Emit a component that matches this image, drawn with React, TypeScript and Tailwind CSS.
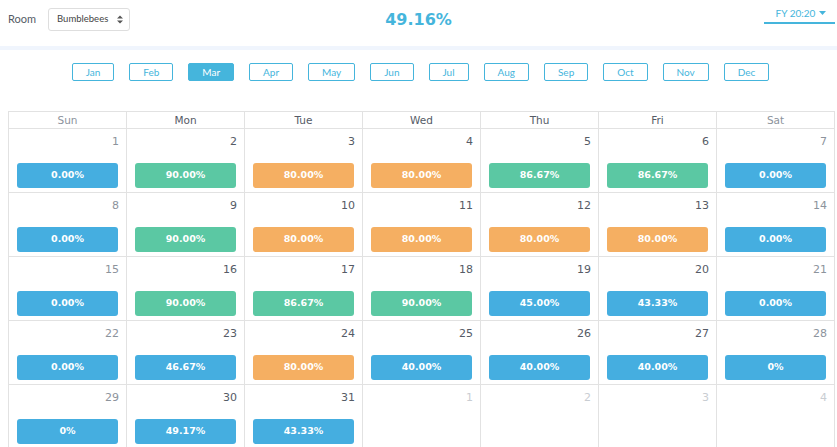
import React from "react";

type C = "b" | "g" | "o";
const colors: Record<C, string> = {
  b: "bg-[#45aee0]",
  g: "bg-[#5bc8a3]",
  o: "bg-[#f5af62]",
};

const rows: [number, string, C][][] = [
  [[1, "0.00%", "b"], [2, "90.00%", "g"], [3, "80.00%", "o"], [4, "80.00%", "o"], [5, "86.67%", "g"], [6, "86.67%", "g"], [7, "0.00%", "b"]],
  [[8, "0.00%", "b"], [9, "90.00%", "g"], [10, "80.00%", "o"], [11, "80.00%", "o"], [12, "80.00%", "o"], [13, "80.00%", "o"], [14, "0.00%", "b"]],
  [[15, "0.00%", "b"], [16, "90.00%", "g"], [17, "86.67%", "g"], [18, "90.00%", "g"], [19, "45.00%", "b"], [20, "43.33%", "b"], [21, "0.00%", "b"]],
  [[22, "0.00%", "b"], [23, "46.67%", "b"], [24, "80.00%", "o"], [25, "40.00%", "b"], [26, "40.00%", "b"], [27, "40.00%", "b"], [28, "0%", "b"]],
  [[29, "0%", "b"], [30, "49.17%", "b"], [31, "43.33%", "b"], [1, "", "b"], [2, "", "b"], [3, "", "b"], [4, "", "b"]],
];

const months = ["Jan", "Feb", "Mar", "Apr", "May", "Jun", "Jul", "Aug", "Sep", "Oct", "Nov", "Dec"];
const days = ["Sun", "Mon", "Tue", "Wed", "Thu", "Fri", "Sat"];

export default function App() {
  return (
    <div className="w-[837px] h-[447px] overflow-hidden bg-white font-['DejaVu_Sans',sans-serif]">
      {/* header */}
      <div className="h-[46px] flex items-start justify-between relative">
        <div className="flex items-center pl-2 pt-2 font-['Lato',sans-serif]">
          <span className="text-[11px] text-[#555b66]">Room</span>
          <div className="ml-[12px] w-[82px] h-[23px] border border-[#dedede] rounded-[3px] flex items-center pl-[8px] pr-[6px] justify-between">
            <span className="text-[9.5px] text-[#444]">Bumblebees</span>
            <svg width="6" height="9" viewBox="0 0 6 9">
              <path d="M0 3.5 L3 0.5 L6 3.5 Z M0 5.5 L3 8.5 L6 5.5 Z" fill="#555" />
            </svg>
          </div>
        </div>
        <div className="absolute left-0 right-0 top-[8px] text-center text-[16px] font-bold text-[#45b5dc] pointer-events-none">
          49.16%
        </div>
        <div className="mr-[2px] mt-[5px] w-[71px] border-b-2 border-[#45b5dc] h-[19px] flex items-start justify-center pt-[1px] pl-[3px]">
          <span className="text-[10px] text-[#45b5dc] font-['Lato',sans-serif]">FY 20:20</span>
          <svg width="7" height="4" viewBox="0 0 7 4" className="ml-[4px] mt-[5px]">
            <path d="M0 0 L7 0 L3.5 4 Z" fill="#45b5dc" />
          </svg>
        </div>
      </div>
      <div className="h-[4px] bg-[#f0f5fd]" />

      {/* months */}
      <div className="flex justify-center gap-[15px] mt-[13px] pl-[4px] font-['Lato',sans-serif]">
        {months.map((m) =>
          m === "Mar" ? (
            <div key={m} className="h-[18px] px-[13px] rounded-[2px] border border-[#45b5dc] bg-[#45b5dc] text-white text-[10px] flex items-center">
              {m}
            </div>
          ) : (
            <div key={m} className="h-[18px] px-[13px] rounded-[2px] border border-[#45b5dc] text-[#45b5dc] text-[10px] flex items-center">
              {m}
            </div>
          )
        )}
      </div>

      {/* calendar */}
      <div className="mt-[30px] ml-2 w-[827px] border-l border-t border-[#e2e2e2]">
        <div className="grid grid-cols-7">
          {days.map((d, i) => (
            <div
              key={d}
              className={`h-[17px] border-r border-b border-[#e2e2e2] text-center text-[10.5px] leading-[16px] ${
                i === 0 || i === 6 ? "text-[#8c939c]" : "text-[#555b66]"
              }`}
            >
              {d}
            </div>
          ))}
        </div>
        {rows.map((row, ri) => (
          <div key={ri} className="grid grid-cols-7">
            {row.map(([n, v, c], ci) => {
              const other = ri === 4 && ci >= 3;
              const numColor = other ? "text-[#c9cdd2]" : ci === 0 || ci === 6 ? "text-[#8c939c]" : "text-[#555b66]";
              return (
                <div key={ci} className="h-[64px] border-r border-b border-[#e2e2e2] flex flex-col">
                  <div className={`text-right pr-[7px] pt-[5px] text-[11px] leading-[16px] ${numColor}`}>{n}</div>
                  {v && (
                    <div
                      className={`mx-[8px] mt-[13px] h-[25px] rounded-[3px] ${colors[c]} text-white text-[9.5px] font-bold flex items-center justify-center`}
                    >
                      {v}
                    </div>
                  )}
                </div>
              );
            })}
          </div>
        ))}
      </div>
    </div>
  );
}
